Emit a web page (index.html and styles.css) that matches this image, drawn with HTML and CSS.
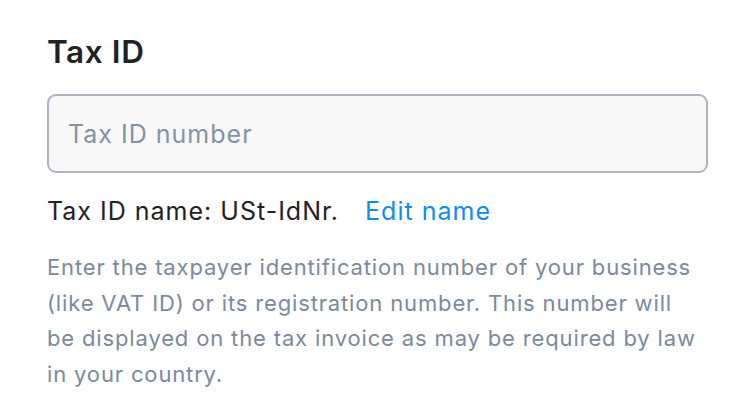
FILE: index.html
```html
<!DOCTYPE html>
<html lang="en">
<head>
<meta charset="utf-8">
<title>Tax ID</title>
<link rel="stylesheet" href="styles.css">
</head>
<body>
  <section class="tax-field">
    <h2 class="tax-title">Tax ID</h2>
    <input class="tax-input" type="text" placeholder="Tax ID number">
    <div class="tax-name">
      <span class="tax-name-label">Tax ID name: USt-IdNr.</span>
      <a class="tax-edit" href="#">Edit name</a>
    </div>
    <p class="tax-help">Enter the taxpayer identification number of your business (like VAT ID) or its registration number. This number will be displayed on the tax invoice as may be required by law in your country.</p>
  </section>
</body>
</html>
```
FILE: styles.css
```css
html, body {
  margin: 0;
  padding: 0;
  background: #ffffff;
}

body {
  font-family: Inter, "Noto Sans", "Liberation Sans", sans-serif;
  color: #1f2226;
}

.tax-field {
  width: 661px;
  padding: 33px 0 0 47px;
  display: flex;
  flex-direction: column;
}

.tax-title {
  margin: 0;
  font-size: 31.5px;
  font-weight: 600;
  line-height: 38px;
  letter-spacing: 0.6px;
  color: #1f2226;
}

.tax-input {
  box-sizing: border-box;
  margin-top: 23px;
  width: 661px;
  height: 79px;
  padding: 0 19px;
  border: 2px solid #acb5bf;
  border-radius: 9px;
  background: #f8f8f8;
  font-family: inherit;
  font-size: 25px;
  letter-spacing: 1px;
  color: #1f2226;
  outline: none;
}

.tax-input::placeholder {
  color: #8393a6;
  opacity: 1;
}

.tax-name {
  margin-top: 23px;
  display: flex;
  align-items: baseline;
  gap: 26px;
  font-size: 25px;
  line-height: 30px;
  letter-spacing: 1px;
}

.tax-name-label {
  color: #1f2226;
}

.tax-edit {
  color: #0c8eef;
  text-decoration: none;
}

.tax-help {
  margin: 24px 0 0;
  max-width: 650px;
  font-size: 22px;
  line-height: 35.5px;
  letter-spacing: 0.85px;
  color: #7a8a9e;
}
```
